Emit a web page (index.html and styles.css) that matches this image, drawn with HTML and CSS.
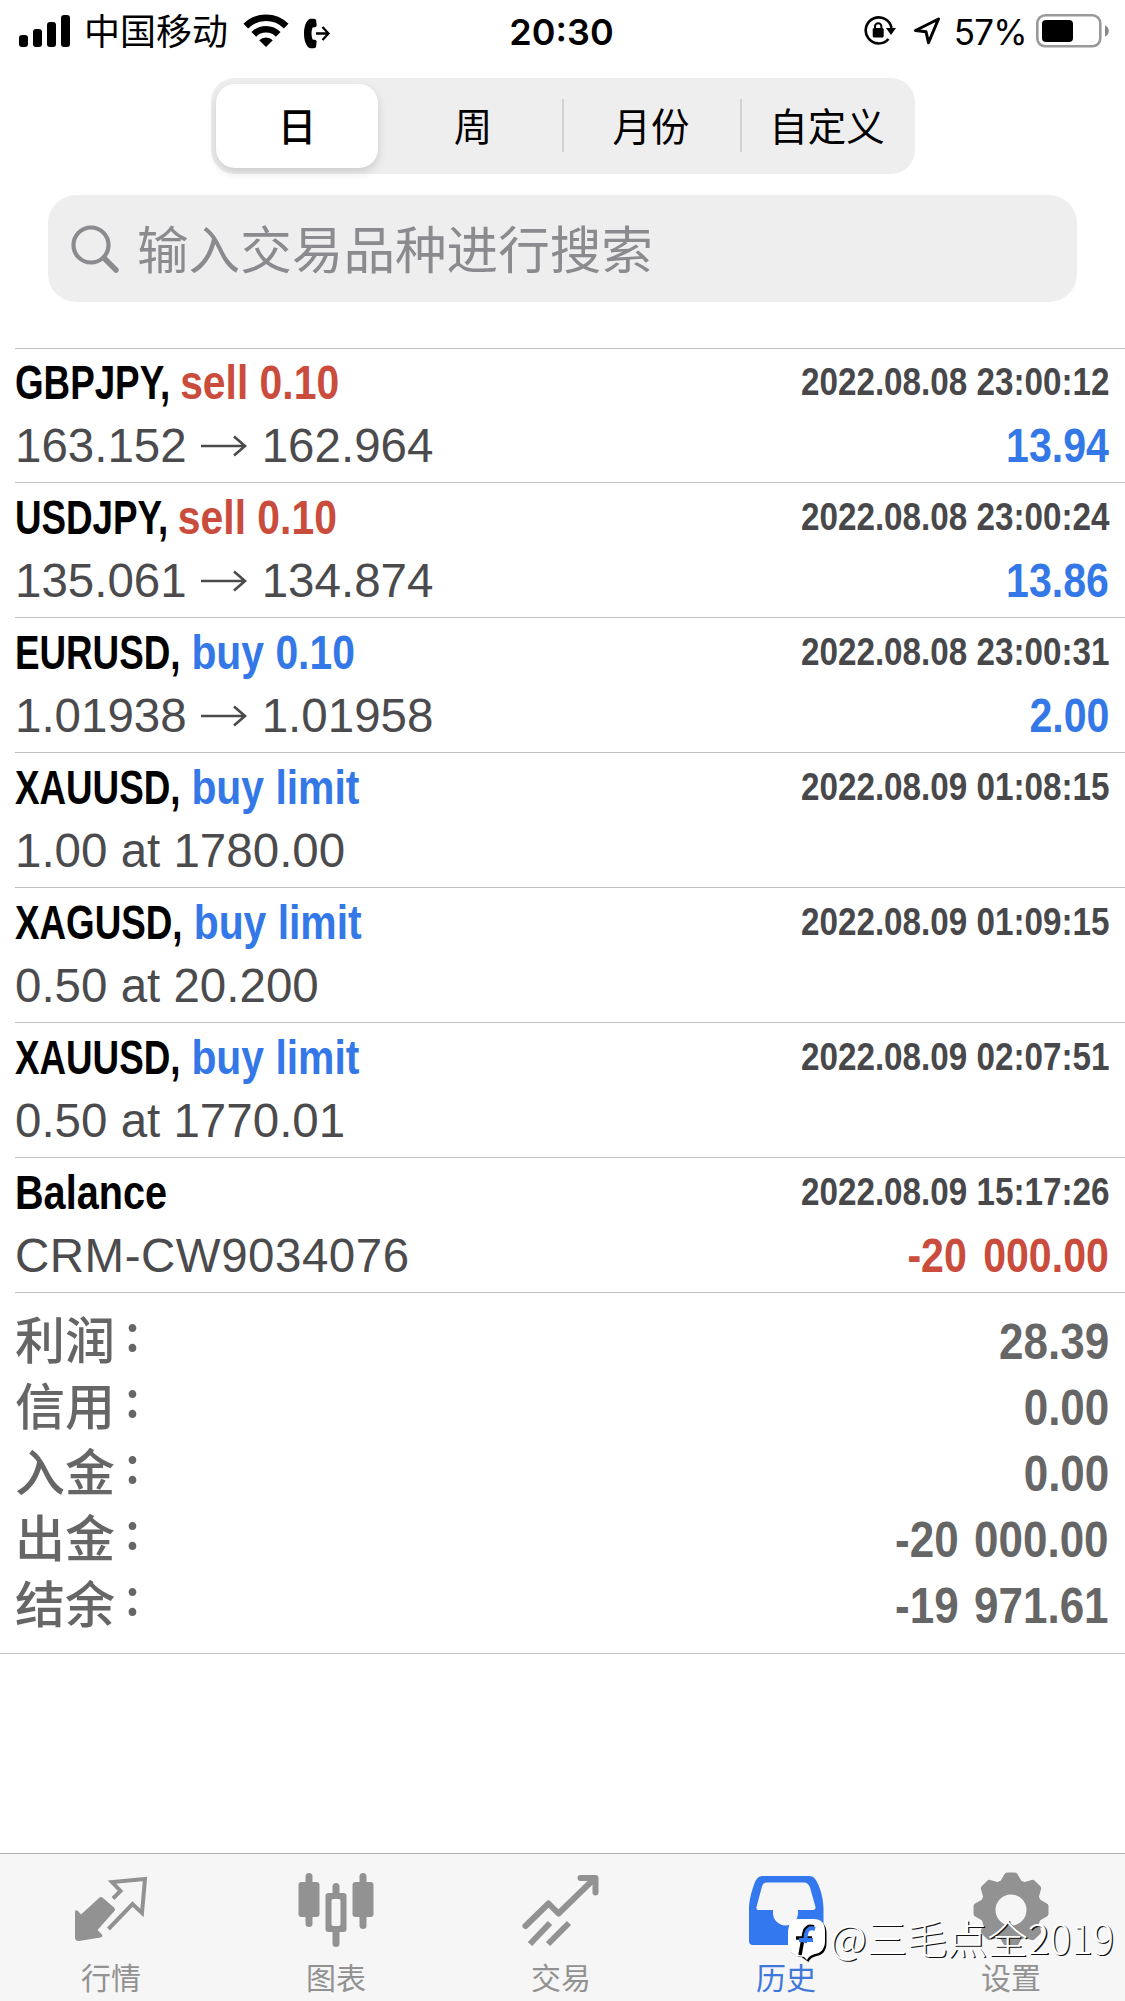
FILE: index.html
```html
<!DOCTYPE html>
<html lang="zh-CN">
<head>
<meta charset="utf-8">
<title>历史</title>
<link rel="stylesheet" href="styles.css">
</head>
<body>
<div class="app">
  <header class="status">
    <div class="status-left">
      <svg class="signal" width="52" height="32" viewBox="0 0 52 32"><rect x="0" y="20" width="9" height="12" rx="3"/><rect x="14" y="14" width="9" height="18" rx="3"/><rect x="28" y="7" width="9" height="25" rx="3"/><rect x="42" y="0" width="9" height="32" rx="3"/></svg>
      <span class="carrier">中国移动</span>
      <svg class="wifi" width="46" height="34" viewBox="0 0 46 34"><g fill="none" stroke="#000" stroke-width="6.6"><path d="M2.8 12.2a28.5 28.5 0 0 1 40.4 0"/><path d="M10.8 20.4a17.2 17.2 0 0 1 24.4 0"/></g><path d="M23 33l-6.8-6.8a9.6 9.6 0 0 1 13.6 0z"/></svg>
      <svg class="forward" width="26" height="31" viewBox="0 0 26 31"><path d="M6 .8h4c1.400 0 2 .8 2.200 2l.4 4.200c.1 1.400-.7 2.200-2 2.300l-2 .3c-1.500 3.500-1.500 8.300 0 11.800l2 .3c1.300.1 2.100.9 2 2.300l-.4 4c-.2 1.500-1 2.200-2.200 2.200h-4C2.300 29 0 22.500 0 15.500S2.300 2.500 6 .8z"/><path d="M12 15.500h12M18.500 9l6 6.500-6 6.500" fill="none" stroke="#000" stroke-width="2.300"/></svg>
    </div>
    <div class="clock">20:30</div>
    <div class="status-right">
      <svg class="lock" width="32" height="30" viewBox="0 0 32 30"><path d="M27.500 12A13 13 0 1 0 24.500 23" fill="none" stroke="#000" stroke-width="2.600"/><path d="M22 12h10l-5 7z"/><rect x="8.700" y="12" width="11" height="9.500" rx="1.500"/><path d="M11 13v-2.500a3.200 3.200 0 0 1 6.400 0V13" fill="none" stroke="#000" stroke-width="2"/></svg>
      <svg class="locate" width="28" height="29" viewBox="0 0 28 29"><path d="M25.500 2L2.500 13.500l10.500 1.200 2.500 11z" fill="none" stroke="#000" stroke-width="3" stroke-linejoin="round"/></svg>
      <span class="percent">57%</span>
      <svg class="battery" width="74" height="34" viewBox="0 0 74 34"><rect x="1.300" y="1.300" width="63" height="31" rx="8" fill="none" stroke="#999" stroke-width="2.600"/><rect x="6" y="6" width="31" height="22" rx="4"/><path d="M69 11.500c5 1.500 5 9.500 0 11z" fill="#888"/></svg>
    </div>
  </header>

  <nav class="segments">
    <span class="segment selected">日</span>
    <span class="segment week">周</span>
    <span class="segment divided">月份</span>
    <span class="segment divided custom">自定义</span>
  </nav>

  <div class="search">
    <svg width="48" height="48" viewBox="0 0 48 48" fill="none" stroke="#8b8b8f"><circle cx="20" cy="20" r="17.500" stroke-width="4.200"/><path d="M33 33l12 12" stroke-width="5.500" stroke-linecap="round"/></svg>
    <span>输入交易品种进行搜索</span>
  </div>

  <main class="history">
    <section class="deal">
      <div class="line"><b class="title"><span class="symbol">GBPJPY,</span> <span class="sell">sell 0.10</span></b><time>2022.08.08 23:00:12</time></div>
      <div class="line detail"><span class="prices">163.152<svg class="arrow" viewBox="0 0 46 22"><path d="M0 11h43M33 1.500l11 9.500-11 9.500"/></svg>162.964</span><b class="amount buy">13.94</b></div>
    </section>
    <section class="deal">
      <div class="line"><b class="title"><span class="symbol">USDJPY,</span> <span class="sell">sell 0.10</span></b><time>2022.08.08 23:00:24</time></div>
      <div class="line detail"><span class="prices">135.061<svg class="arrow" viewBox="0 0 46 22"><path d="M0 11h43M33 1.500l11 9.500-11 9.500"/></svg>134.874</span><b class="amount buy">13.86</b></div>
    </section>
    <section class="deal">
      <div class="line"><b class="title"><span class="symbol">EURUSD,</span> <span class="buy">buy 0.10</span></b><time>2022.08.08 23:00:31</time></div>
      <div class="line detail"><span class="prices">1.01938<svg class="arrow" viewBox="0 0 46 22"><path d="M0 11h43M33 1.500l11 9.500-11 9.500"/></svg>1.01958</span><b class="amount buy">2.00</b></div>
    </section>
    <section class="deal">
      <div class="line"><b class="title"><span class="symbol">XAUUSD,</span> <span class="buy">buy limit</span></b><time>2022.08.09 01:08:15</time></div>
      <div class="line detail"><span class="prices">1.00 at 1780.00</span></div>
    </section>
    <section class="deal">
      <div class="line"><b class="title"><span class="symbol">XAGUSD,</span> <span class="buy">buy limit</span></b><time>2022.08.09 01:09:15</time></div>
      <div class="line detail"><span class="prices">0.50 at 20.200</span></div>
    </section>
    <section class="deal">
      <div class="line"><b class="title"><span class="symbol">XAUUSD,</span> <span class="buy">buy limit</span></b><time>2022.08.09 02:07:51</time></div>
      <div class="line detail"><span class="prices">0.50 at 1770.01</span></div>
    </section>
    <section class="deal">
      <div class="line"><b class="title"><span class="word">Balance</span></b><time>2022.08.09 15:17:26</time></div>
      <div class="line detail"><span class="prices comment">CRM-CW9034076</span><b class="amount sell">-20 000.00</b></div>
    </section>
  </main>

  <section class="summary">
    <div class="total"><span>利润<i>:</i></span><b>28.39</b></div>
    <div class="total"><span>信用<i>:</i></span><b>0.00</b></div>
    <div class="total"><span>入金<i>:</i></span><b>0.00</b></div>
    <div class="total"><span>出金<i>:</i></span><b>-20 000.00</b></div>
    <div class="total"><span>结余<i>:</i></span><b>-19 971.61</b></div>
  </section>

  <footer class="tabs">
    <div class="tab"><svg width="80" height="80" viewBox="0 0 80 80"><path d="M4 40q0-3 3-1l3 3.500L28 26q2-2 4 0l11 9.500q2 2 0 4L26.500 58l4 4q2 3-1 3.500L8 69q-4 0-4-3z" fill="#929292"/><path d="M42 26.500l7.500-7.500-8.500-9 33-3-3 34-9.500-9-24 25" fill="none" stroke="#929292" stroke-width="4"/></svg><span>行情</span></div>
    <div class="tab"><svg width="80" height="80" viewBox="0 0 80 80" fill="#929292"><rect x="9.500" y="1" width="7" height="54" rx="3.500"/><rect x="2.500" y="10" width="21" height="35" rx="3"/><rect x="63.500" y="1" width="7" height="56" rx="3.500"/><rect x="56.500" y="10" width="21" height="35" rx="3"/><rect x="36.500" y="11" width="7" height="64" rx="3.500"/><rect x="29.500" y="21" width="21" height="39" rx="3"/><rect x="35.500" y="27" width="9" height="27" rx="2" fill="#f6f6f6"/></svg><span>图表</span></div>
    <div class="tab"><svg width="80" height="80" viewBox="0 0 80 80" fill="none" stroke="#929292" stroke-width="6" stroke-linejoin="round"><path d="M4.500 54l23-22.500 10 10L73 7M59.500 6h15v14.500" stroke-linecap="round"/><path d="M9 72l20-21M27 72l21-21"/></svg><span>交易</span></div>
    <div class="tab active"><svg width="80" height="80" viewBox="0 0 80 80"><path fill="#3478f0" fill-rule="evenodd" d="M17 4h46c4 0 6 2 8 6 4 8 6.500 17 6.500 28v31q0 4-4 4H7q-4 0-4-4V38C3 27 6 18 9 10c2-4 4-6 8-6zm4 6.500c-3 0-4 1.500-5 4L10.500 35q-.5 3 1.500 3h15v3a12.500 12.500 0 0 0 25 0v-3h15q3 0 2.500-3L64 15.500c-1-3-3-5-6-5z"/></svg><span>历史</span></div>
    <div class="tab"><svg width="80" height="80" viewBox="0 0 80 80"><g fill="#929292" transform="translate(40 38)"><circle r="31"/><g id="pair"><path id="teeth" d="M-11-28L-7-35q1-2.500 3-2.500h8q2 0 3 2.500l4 7V28L7 35q-1 2.500-3 2.500h-8q-2 0-3-2.500l-4-7z"/><use href="#teeth" transform="rotate(90)"/></g><use href="#pair" transform="rotate(45)"/><circle r="15.500" fill="#f6f6f6"/></g></svg><span>设置</span></div>
    <div class="watermark">
      <svg width="42" height="46" viewBox="0 0 42 46"><path d="M11 0h16c7 0 11 4 11 12v10c0 8-4 12-10 13-4 1-7 3-8 6l-7-5C4 35 1 30 1 24v-9C1 6 4 0 11 0z" fill="#000" transform="translate(1.500 2)"/><path d="M11 0h16c7 0 11 4 11 12v10c0 8-4 12-10 13-4 1-7 3-8 6l-3-3-8-1C4 34 1 30 1 24v-9C1 6 4 0 11 0z" fill="#fff"/><path d="M27 8c-6-2-9 1-10 6l-4 22M9 19h16" fill="none" stroke="#000" stroke-width="3.500"/><path d="M28 10c-6-2-8 1-9 5l-1 9M12 21h14" fill="none" stroke="#3478f0" stroke-width="4"/></svg>
      <span>@三毛点全2019</span>
    </div>
  </footer>
</div>
</body>
</html>
```
FILE: styles.css
```css
* { box-sizing: border-box; }
body { margin: 0; background: #fff; }
.app {
  width: 1125px;
  height: 2001px;
  display: flex;
  flex-direction: column;
  overflow: hidden;
  font-family: "Liberation Sans", "Noto Sans CJK SC", sans-serif;
  color: #000;
}
svg { display: block; flex: none; }

.status {
  height: 78px;
  padding: 0 15px 18px 19px;
  display: grid;
  grid-template-columns: 1fr auto 1fr;
  align-items: center;
}
.status-left, .status-right { display: flex; align-items: center; }
.status-right { justify-content: flex-end; }
.carrier { margin-left: 13px; padding-bottom: 3px; font: 36px/57px "Noto Sans CJK SC", sans-serif; }
.wifi { margin-left: 15px; }
.forward { margin-left: 15px; margin-top: 4px; }
.clock { font: 600 36px/60px Inter, sans-serif; padding: 2px 6px 0 0; }
.locate { margin-left: 17px; }
.percent { margin-left: 13px; font: 35px/60px Inter, sans-serif; padding-top: 2px; letter-spacing: -.7px; }
.battery { margin-left: 9px; }

.segments {
  width: 704px;
  height: 96px;
  margin-left: 211px;
  padding: 6px 5px;
  display: grid;
  grid-template-columns: 162px 184px 178px 1fr;
  background: #eee;
  border-radius: 24px;
}
.segment {
  display: flex;
  align-items: center;
  justify-content: center;
  padding-bottom: 3px;
  font: 38.5px/81px "Noto Sans CJK SC", sans-serif;
}
.selected {
  background: #fff;
  border-radius: 19px;
  font-weight: 500;
  box-shadow: 0 4px 10px rgba(0, 0, 0, .15);
}
.week { padding-left: 6px; }
.divided { background: linear-gradient(#d2d2d2, #d2d2d2) 0 15px / 2px 53px no-repeat; }
.custom { padding-left: 4px; }

.search {
  height: 107px;
  margin: 21px 48px 46px;
  padding-left: 23px;
  display: flex;
  align-items: center;
  gap: 18px;
  border-radius: 28px;
  background: #eee;
  color: #8b8b8f;
  font: 51.6px/100px "Noto Sans CJK SC", sans-serif;
}
.search span { padding-bottom: 3px; }

.history { padding-left: 15px; }
.deal { height: 135px; padding-top: 1px; border-top: 1px solid #c2c2c4; }
.deal:first-child { height: 134px; padding-top: 0; }
.line { height: 67px; display: flex; justify-content: space-between; padding-right: 16px; white-space: nowrap; }
.detail { height: 59px; }
.title, .amount { font-size: 47.5px; line-height: 67px; transform: scaleX(.86); transform-origin: left; }
.amount { line-height: 59px; word-spacing: .12em; transform: scaleX(.865); transform-origin: right; margin-left: auto; }
.symbol { display: inline-block; transform: scaleX(.9); transform-origin: left; margin-right: -.46em; }
.word { display: inline-block; transform: scaleX(.97); transform-origin: left; }
time {
  font-size: 38.5px;
  font-weight: 700;
  line-height: 65px;
  color: #48484b;
  transform: scaleX(.863);
  transform-origin: right;
}
.prices { display: flex; align-items: center; font-size: 47.5px; line-height: 59px; color: #4b4b4e; }
.comment { letter-spacing: .5px; }
.arrow { width: 46px; height: 22px; margin: 0 15px 0 14px; fill: none; stroke: #4b4b4e; stroke-width: 2.6; }
.sell { color: #c94c3c; }
.buy { color: #3478e8; }

.summary {
  height: 362px;
  padding: 16px 16px 0 15px;
  border-bottom: 1px solid #c2c2c4;
  background: linear-gradient(#c2c2c4, #c2c2c4) 15px 0 / 100% 1px no-repeat;
  color: #666;
}
.total { height: 66px; padding-top: 1px; display: flex; justify-content: space-between; }
.total span { display: flex; margin-top: -5px; font: 500 50px/66px "Noto Sans CJK SC", sans-serif; }
.total i { font-style: normal; margin: -8px 0 0 10px; }
.total b { font-size: 50px; line-height: 66px; word-spacing: .07em; transform: scaleX(.88); transform-origin: right; }

.tabs {
  position: relative;
  height: 148px;
  margin-top: auto;
  padding-top: 18px;
  display: grid;
  grid-template-columns: repeat(5, 225px);
  background: #f6f6f6;
  border-top: 1px solid #b0b0b0;
}
.tab { display: flex; flex-direction: column; align-items: center; color: #929292; font: 30px/44px "Noto Sans CJK SC", sans-serif; padding-right: 3px; }
.tab svg { margin-bottom: 2px; }
.active { color: #3f78db; }
.watermark {
  position: absolute;
  left: 787px;
  top: 65px;
  display: flex;
  white-space: nowrap;
  color: #fff;
  font: 300 40.3px/36px "Noto Sans CJK SC", sans-serif;
  text-shadow: 1.3px 1.3px 0 #111;
}
.watermark span { margin-left: 1px; }
```
